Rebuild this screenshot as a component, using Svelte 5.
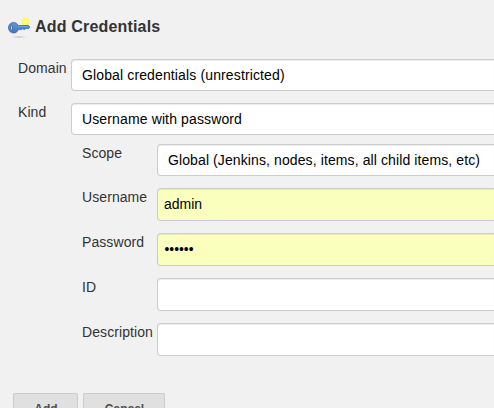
<script>
  const credential = [
    { label: 'Scope', value: 'Global (Jenkins, nodes, items, all child items, etc)', kind: 'select scope' },
    { label: 'Username', value: 'admin', kind: 'filled' },
    { label: 'Password', value: '••••••', kind: 'filled password' },
    { label: 'ID', value: '', kind: 'input' },
    { label: 'Description', value: '', kind: 'input' }
  ];
</script>

<main>
  <header>
    <svg class="key" width="24" height="24" viewBox="0 0 24 24" aria-hidden="true">
      <defs>
        <radialGradient id="shade"><stop offset="0" stop-color="#aaa" /><stop offset="1" stop-color="#eee" stop-opacity="0" /></radialGradient>
        <linearGradient id="blue" x1="0" y1="0" x2="0" y2="1"><stop offset="0" stop-color="#6298d3" /><stop offset="1" stop-color="#4278bb" /></linearGradient>
      </defs>
      <ellipse cx="11" cy="21" rx="11" ry="1.4" fill="url(#shade)" />
      <circle cx="17.5" cy="5.8" r="4" fill="#fff766" />
      <circle cx="17.5" cy="5.8" r="1.4" fill="#fffab0" />
      <path d="M5.4 6.5C7.8 6.5 9.4 7.8 10.2 9.5H20.5L21.7 11L20.6 12.6H19L18 12.2L17 13.4H15.6L14.6 12.8L13.6 13.4H10.4C9.5 15.8 7.8 17 5.6 17C2.6 17 .5 14.6 .5 11.8C.5 8.8 2.7 6.5 5.4 6.5Z" fill="url(#blue)" stroke="#3969a7" stroke-width=".8" />
      <path d="M10 10.6H20.3" stroke="#78a7dc" stroke-width=".8" />
      <ellipse cx="3.6" cy="11.9" rx="1" ry="2.2" fill="#dfe8f2" stroke="#315f9b" stroke-width=".8" />
    </svg>
    <h1>Add Credentials</h1>
  </header>

  <div class="row domain">
    <span class="label">Domain</span>
    <div class="field select">Global credentials (unrestricted)</div>
  </div>
  <div class="row kind">
    <span class="label">Kind</span>
    <div class="field select">Username with password</div>
  </div>

  <section>
    {#each credential as item}
      <div class="row">
        <span class="label">{item.label}</span>
        <div class="field {item.kind}">{item.value}</div>
      </div>
    {/each}
  </section>

  <footer>
    <button class="add">Add</button>
    <button class="cancel">Cancel</button>
  </footer>
</main>

<style>
  :global(body) {
    overflow: hidden;
    background: #f1f1f1;
  }
  main {
    box-sizing: border-box;
    height: 408px;
    overflow: hidden;
    background: #f1f1f1;
    color: #333;
    font: 14px/20px "Liberation Sans", Arial, sans-serif;
    white-space: nowrap;
  }
  header {
    display: flex;
    height: 59px;
    box-sizing: border-box;
    padding: 16px 0 0 8px;
  }
  .key {
    flex: none;
  }
  h1 {
    margin: 0 0 0 3px;
    font-size: 16px;
    line-height: 21px;
    letter-spacing: 0.18px;
  }
  .row {
    display: flex;
    align-items: flex-start;
  }
  .domain,
  .kind {
    padding-left: 18px;
    margin-bottom: 12px;
  }
  .kind {
    margin-bottom: 9px;
  }
  .label {
    flex: none;
    width: 53px;
    margin-top: -1px;
    letter-spacing: 0.08px;
  }
  .field {
    box-sizing: border-box;
    flex: 1;
    height: 33px;
    padding: 0 6px;
    border: 1px solid #ccc;
    border-right: 0;
    border-radius: 4px 0 0 4px;
    background: #fff;
    color: #000;
    line-height: 31px;
    box-shadow: inset 0 1px 1px rgba(0, 0, 0, 0.075);
  }
  .select {
    height: 32px;
    padding-left: 10px;
    letter-spacing: 0.13px;
  }
  .scope {
    letter-spacing: 0.105px;
  }
  .filled {
    background: #faffbd;
  }
  .password {
    padding-left: 6.5px;
    font-size: 13.8px;
  }
  section {
    display: flex;
    flex-direction: column;
    gap: 12px;
    padding-left: 82px;
  }
  section .label {
    width: 75px;
  }
  footer {
    display: flex;
    gap: 5px;
    padding: 37px 0 0 13px;
  }
  button {
    box-sizing: border-box;
    height: 30px;
    padding: 1px 0 0 1px;
    border: 1px solid #ccc;
    border-radius: 1px;
    background: #e0e0e0;
    color: #4d4d4d;
    font: bold 12px/28px "Liberation Sans", Arial, sans-serif;
  }
  .add {
    width: 65px;
  }
  .cancel {
    width: 82px;
  }
</style>
